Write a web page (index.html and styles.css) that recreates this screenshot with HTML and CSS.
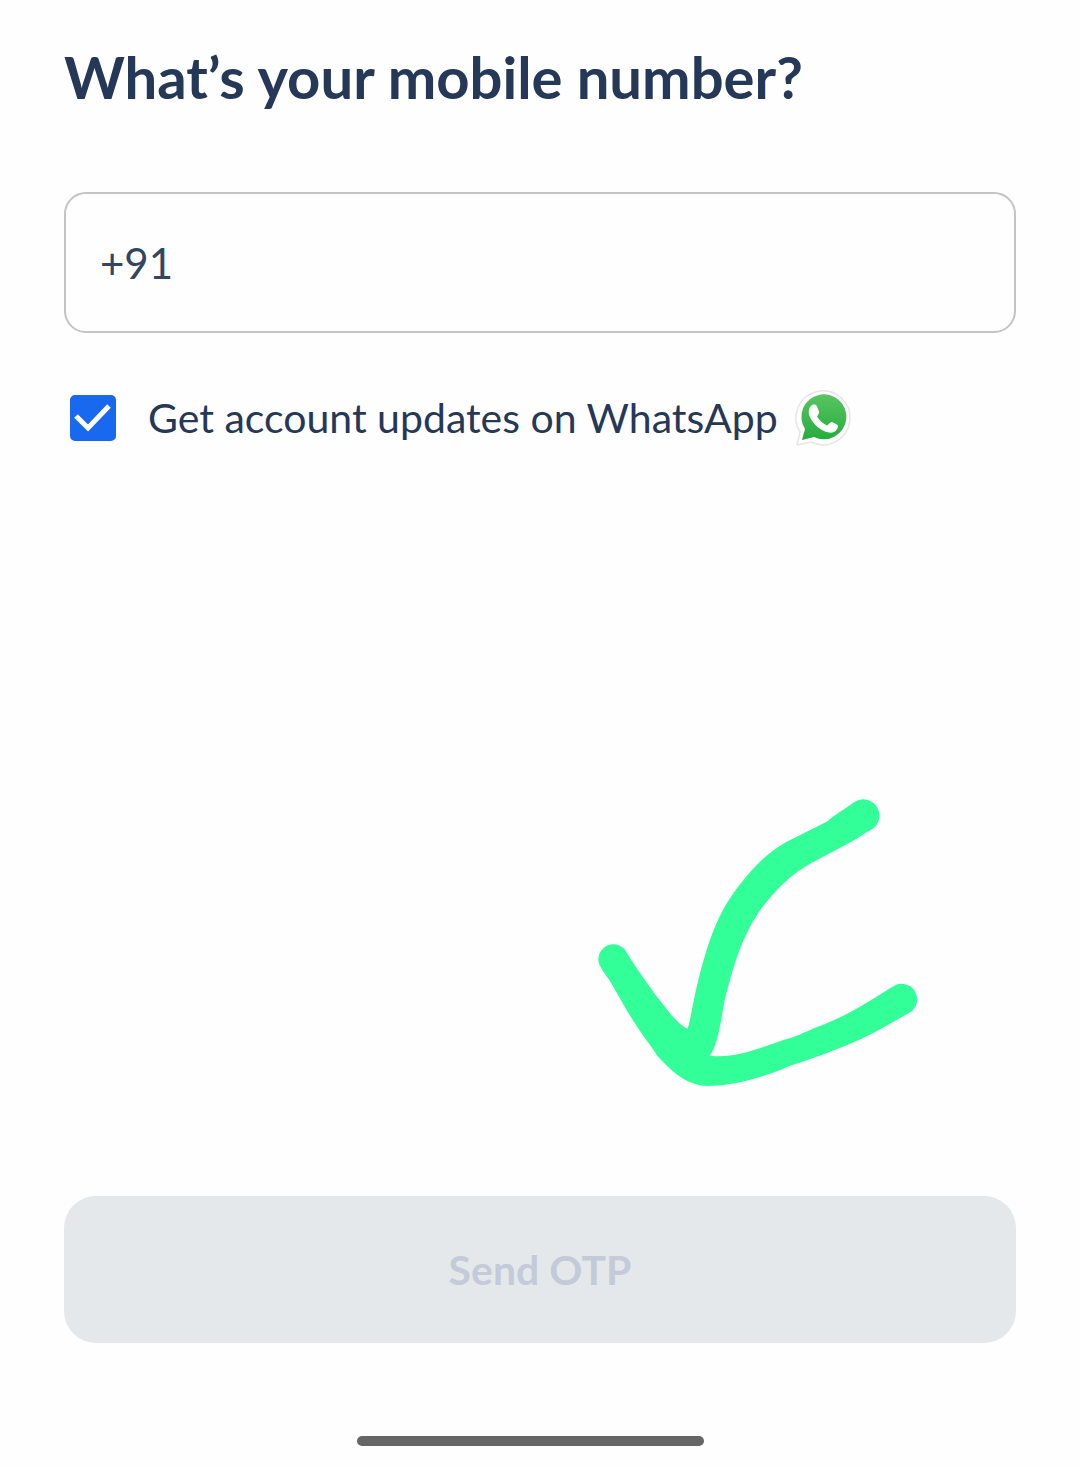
FILE: index.html
```html
<!DOCTYPE html>
<html lang="en">
<head>
    <meta charset="UTF-8">
    <meta name="viewport" content="width=device-width, initial-scale=1.0">
    <title>Mobile number</title>
    <link rel="stylesheet" href="styles.css">
</head>
<body>
    <form class="page">
        <h1><label for="mobile">What’s your mobile number?</label></h1>
        <input class="mobile" type="tel" id="mobile" name="mobile" value="+91">

        <div class="updates">
            <span class="checkbox">
                <input type="checkbox" id="whatsapp" name="whatsapp" checked>
                <svg class="tick" viewBox="0 0 46 46" aria-hidden="true">
                    <path d="M6 21L18 33L39 11" fill="none" stroke="#fff" stroke-width="5"/>
                </svg>
            </span>
            <label for="whatsapp">Get account updates on WhatsApp</label>
            <svg class="whatsapp-icon" viewBox="0 0 56 56" aria-hidden="true">
                <defs>
                    <linearGradient id="green" x1="0" y1="0" x2="0" y2="1">
                        <stop offset="0" stop-color="#58c562"/>
                        <stop offset="1" stop-color="#25ac3e"/>
                    </linearGradient>
                </defs>
                <path d="M1 55L4 42A27 27 0 1 1 15 52Z" fill="#fff" stroke="#e8e4e8" stroke-width="1.5" stroke-linejoin="round"/>
                <path d="M6 50L9 39A22.500 22.500 0 1 1 18 47Z" fill="url(#green)"/>
                <path d="M15 16C17 14 20 14 21 16.500L23 21.500C23.500 23.500 22 24.500 21 26.500C23.500 30.500 26.500 33.500 31 35.500C33 34.500 34 31.500 36 32L41 34.500C43 36 41.500 39 40 40.500C37 43.500 33 43 29 41.500C21 38 16 32 13.500 26C12 22 13 18 15 16Z" fill="#fff"/>
            </svg>
        </div>

        <svg class="arrow" viewBox="0 0 1080 990" aria-hidden="true">
            <path d="M823 66A46 46 0 1 1 876 148C850 162 830 178 806 190L718 236C650 271 617 300 570 353C485 450 458 570 434 660C424 710 416 790 390 826Q360 855 322 800L323 747C331 720 334 694 342 658C370 530 400 430 450 355C500 280 560 217 620 185L740 125C766 103 800 84 823 66Z"/>
            <path d="M63 563A45 45 0 1 1 142 521C170 568 205 613 232 652C268 697 290 730 324 748L390 827C460 836 530 808 612 779C650 770 675 755 714 740C800 709 865 665 940 619A45 45 0 1 1 990 697C966 712 944 722 923 735C850 777 790 803 654 850C635 854 610 868 585 876C510 902 450 917 382 918C310 915 265 863 230 825C220 805 196 779 178 750C145 702 115 645 93 608C84 593 72 580 63 563Z"/>
        </svg>

        <button class="send" type="submit" disabled>Send OTP</button>
        <div class="home-bar"></div>
    </form>
</body>
</html>
```

FILE: styles.css
```css
* {
    box-sizing: border-box;
}
body {
    margin: 0;
    background-color: #fefefe;
    color: #253858;
    font-family: Lato, "Liberation Sans", sans-serif;
}
.page {
    display: flex;
    flex-direction: column;
    min-height: 100vh;
    padding: 41px 64px 21px;
}
h1 {
    margin: 0 0 79px;
    font-size: 58px;
    font-weight: 700;
    line-height: 72px;
}
.mobile {
    width: 100%;
    height: 141px;
    padding: 0 34px;
    border: 2px solid #c4c4c4;
    border-radius: 22px;
    background: transparent;
    color: #344563;
    font-family: inherit;
    font-size: 42px;
}
.updates {
    display: flex;
    align-items: center;
    margin-top: 56px;
    padding-left: 6px;
    font-size: 41px;
    line-height: 58px;
}
.checkbox {
    display: grid;
    width: 46px;
    height: 46px;
    margin-right: 32px;
}
.checkbox input,
.tick {
    grid-area: 1 / 1;
    width: 46px;
    height: 46px;
    margin: 0;
}
.checkbox input {
    appearance: none;
    border: 3px solid #1868f0;
    border-radius: 5px;
}
.checkbox input:checked {
    background-color: #1868f0;
}
.tick {
    visibility: hidden;
    pointer-events: none;
}
.checkbox input:checked + .tick {
    visibility: visible;
}
.whatsapp-icon {
    width: 56px;
    height: 56px;
    margin-left: 18px;
    overflow: visible;
}
.arrow {
    align-self: flex-end;
    width: 360px;
    height: 330px;
    margin: auto 76px 86px 0;
    fill: #33ff99;
}
.send {
    height: 147px;
    border: 0;
    border-radius: 32px;
    background-color: #e4e8eb;
    color: #c5cad9;
    font-family: inherit;
    font-size: 41px;
    font-weight: 700;
}
.home-bar {
    align-self: center;
    width: 347px;
    height: 10px;
    margin: 93px 20px 0 0;
    border-radius: 5px;
    background-color: #666;
}
```
